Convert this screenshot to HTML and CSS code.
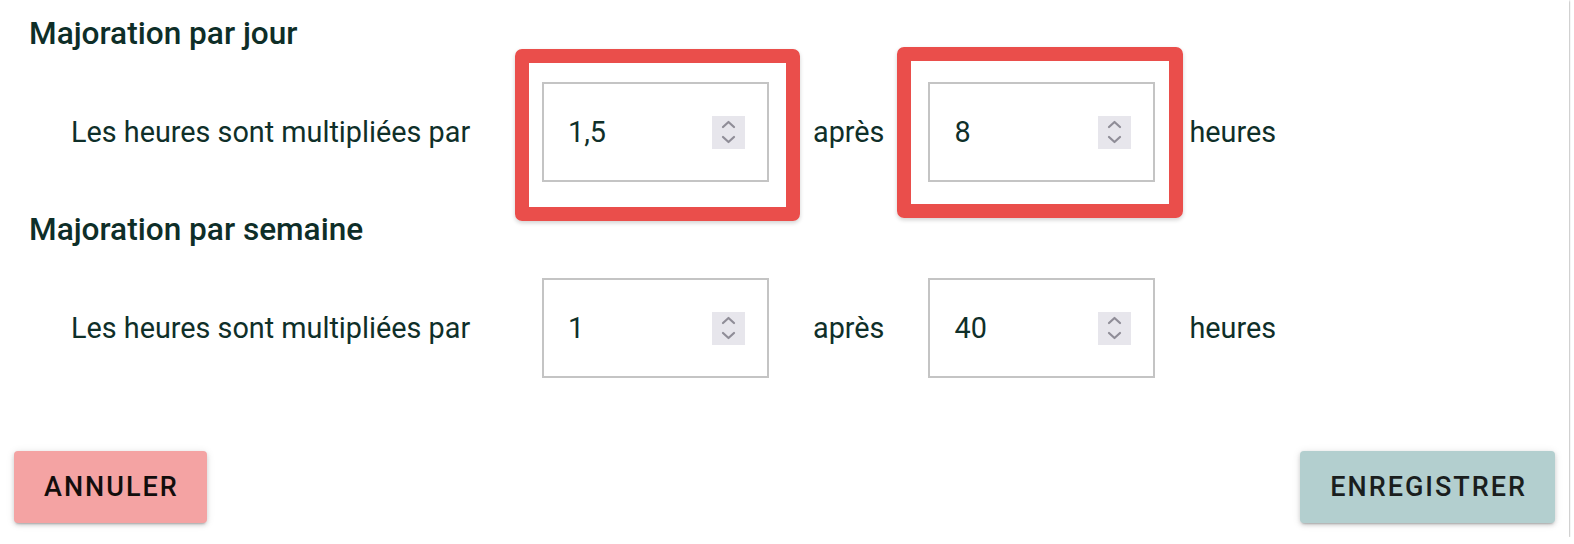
FILE: index.html
```html
<!DOCTYPE html>
<html lang="fr">
<head>
<meta charset="utf-8">
<title>Majoration</title>
<link rel="stylesheet" href="styles.css">
</head>
<body>
<div class="card">
  <div class="content">
    <h2 class="heading">Majoration par jour</h2>
    <div class="row">
      <span class="label">Les heures sont multipliées par</span>
      <div class="field-wrap">
        <div class="field"><span class="value">1,5</span>
          <span class="spin"><svg width="33" height="33" viewBox="0 0 33 33"><path d="M11 11 L16.5 6 L22 11" /><path d="M11 21 L16.5 26 L22 21" /></svg></span>
        </div>
        <div class="mark mark-a"></div>
      </div>
      <span class="word after">après</span>
      <div class="field-wrap">
        <div class="field"><span class="value">8</span>
          <span class="spin"><svg width="33" height="33" viewBox="0 0 33 33"><path d="M11 11 L16.5 6 L22 11" /><path d="M11 21 L16.5 26 L22 21" /></svg></span>
        </div>
        <div class="mark mark-b"></div>
      </div>
      <span class="word hours">heures</span>
    </div>
    <h2 class="heading">Majoration par semaine</h2>
    <div class="row">
      <span class="label">Les heures sont multipliées par</span>
      <div class="field-wrap">
        <div class="field"><span class="value">1</span>
          <span class="spin"><svg width="33" height="33" viewBox="0 0 33 33"><path d="M11 11 L16.5 6 L22 11" /><path d="M11 21 L16.5 26 L22 21" /></svg></span>
        </div>
      </div>
      <span class="word after">après</span>
      <div class="field-wrap">
        <div class="field"><span class="value">40</span>
          <span class="spin"><svg width="33" height="33" viewBox="0 0 33 33"><path d="M11 11 L16.5 6 L22 11" /><path d="M11 21 L16.5 26 L22 21" /></svg></span>
        </div>
      </div>
      <span class="word hours">heures</span>
    </div>
  </div>
  <div class="footer">
    <button class="btn btn-cancel">ANNULER</button>
    <button class="btn btn-save">ENREGISTRER</button>
  </div>
</div>
</body>
</html>
```
FILE: styles.css
```css
html, body {
  margin: 0;
  padding: 0;
  background: #ffffff;
}
body {
  font-family: Roboto, "Liberation Sans", Arial, sans-serif;
  color: #0f2f29;
}
.card {
  width: calc(100% - 5px);
  height: 537px;
  background: #ffffff;
  box-shadow: 0 1px 2px rgba(0, 0, 0, 0.45), 0 0 2px rgba(0, 0, 0, 0.12);
  display: flex;
  flex-direction: column;
  box-sizing: border-box;
}
.content {
  padding: 16px 0 0 29px;
}
.heading {
  margin: 0 0 30px 0;
  font-size: 31.6px;
  line-height: 36px;
  font-weight: 500;
  color: #0e2e28;
}
.row {
  display: flex;
  align-items: center;
  height: 100px;
  margin-bottom: 30px;
}
.label {
  font-size: 28.8px;
  width: 513px;
  padding-left: 42px;
  box-sizing: border-box;
  flex: none;
}
.word {
  font-size: 28.8px;
}
.after {
  margin: 0 44px;
}
.hours {
  margin-left: 34px;
}
.field-wrap {
  position: relative;
  width: 227px;
  height: 100px;
  flex: none;
}
.field {
  box-sizing: border-box;
  width: 100%;
  height: 100%;
  border: 2px solid #c4c4c4;
  display: flex;
  align-items: center;
  padding: 0 22px 0 24px;
  background: #fff;
}
.value {
  flex: 1;
  font-size: 28.8px;
  color: #0f2f29;
}
.spin {
  width: 33px;
  height: 33px;
  background: #e7e6ec;
  display: block;
}
.spin svg {
  display: block;
}
.spin path {
  fill: none;
  stroke: #8f8d97;
  stroke-width: 2.2;
  stroke-linecap: round;
  stroke-linejoin: round;
}
.mark {
  position: absolute;
  border: 14px solid #ea4e4b;
  border-radius: 7px;
  box-shadow: 0 2px 4px rgba(0, 0, 0, 0.18);
}
.mark-a {
  left: -27px;
  right: -31px;
  top: -33px;
  bottom: -39px;
}
.mark-b {
  left: -31px;
  right: -28px;
  top: -35px;
  bottom: -36px;
}
.footer {
  margin-top: auto;
  padding: 0 14px 14px 14px;
  display: flex;
  justify-content: space-between;
}
.btn {
  height: 72px;
  border: none;
  border-radius: 4px;
  font-family: Roboto, "Liberation Sans", Arial, sans-serif;
  font-size: 27px;
  font-weight: 500;
  letter-spacing: 2px;
  padding: 0 28px 0 30px;
  box-shadow: 0 3px 2px -2px rgba(0, 0, 0, 0.2), 0 2px 4px rgba(0, 0, 0, 0.14), 0 1px 8px rgba(0, 0, 0, 0.1);
  cursor: pointer;
}
.btn-cancel {
  background: #f4a3a3;
  color: #120d0c;
}
.btn-save {
  background: #b3cfcf;
  color: #1a1e1e;
}
```
